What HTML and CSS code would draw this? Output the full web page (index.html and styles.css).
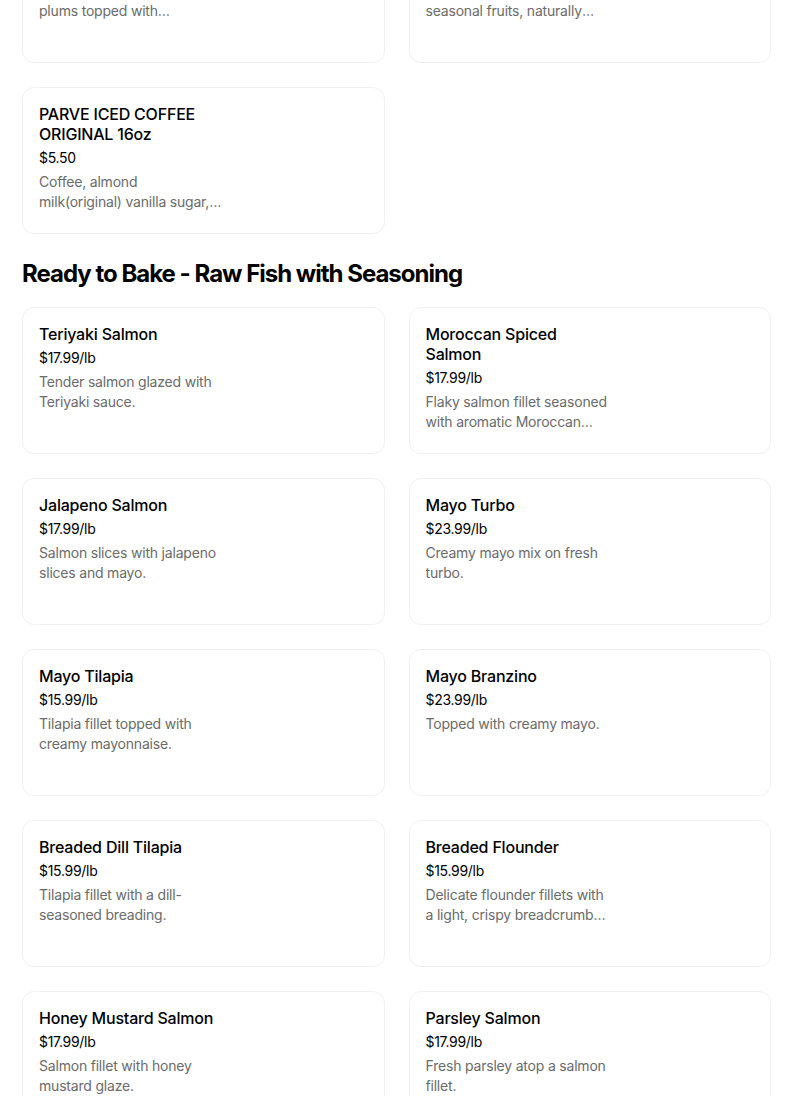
FILE: index.html
```html
<!DOCTYPE html>
<html lang="en">
<head>
<meta charset="utf-8">
<title>Menu</title>
<link rel="stylesheet" href="styles.css">
</head>
<body>
<main class="menu">
  <section class="section section-first">
    <div class="grid">
      <div class="card">
        <div class="info">
          <h3 class="title">Plum Crumble Cake</h3>
          <div class="price">$8.99</div>
          <p class="desc">Soft cake with ripe, juicy plums topped with butterscotch crumble.</p>
        </div>
      </div>
      <div class="card">
        <div class="info">
          <h3 class="title">Fruit Sorbet</h3>
          <div class="price">$6.99</div>
          <p class="desc">Refreshing sorbet with seasonal fruits, naturally sweetened and dairy free.</p>
        </div>
      </div>
      <div class="card">
        <div class="info">
          <h3 class="title">PARVE ICED COFFEE ORIGINAL 16oz</h3>
          <div class="price">$5.50</div>
          <p class="desc">Coffee, almond milk(original) vanilla sugar, crushed ice.</p>
        </div>
      </div>
    </div>
  </section>

  <section class="section">
    <h2 class="section-title">Ready to Bake - Raw Fish with Seasoning</h2>
    <div class="grid">
      <div class="card">
        <div class="info">
          <h3 class="title">Teriyaki Salmon</h3>
          <div class="price">$17.99/lb</div>
          <p class="desc">Tender salmon glazed with Teriyaki sauce.</p>
        </div>
      </div>
      <div class="card">
        <div class="info">
          <h3 class="title">Moroccan Spiced Salmon</h3>
          <div class="price">$17.99/lb</div>
          <p class="desc">Flaky salmon fillet seasoned with aromatic Moroccan spices and herbs.</p>
        </div>
      </div>
      <div class="card">
        <div class="info">
          <h3 class="title">Jalapeno Salmon</h3>
          <div class="price">$17.99/lb</div>
          <p class="desc">Salmon slices with jalapeno slices and mayo.</p>
        </div>
      </div>
      <div class="card">
        <div class="info">
          <h3 class="title">Mayo Turbo</h3>
          <div class="price">$23.99/lb</div>
          <p class="desc">Creamy mayo mix on fresh turbo.</p>
        </div>
      </div>
      <div class="card">
        <div class="info">
          <h3 class="title">Mayo Tilapia</h3>
          <div class="price">$15.99/lb</div>
          <p class="desc">Tilapia fillet topped with creamy mayonnaise.</p>
        </div>
      </div>
      <div class="card">
        <div class="info">
          <h3 class="title">Mayo Branzino</h3>
          <div class="price">$23.99/lb</div>
          <p class="desc">Topped with creamy mayo.</p>
        </div>
      </div>
      <div class="card">
        <div class="info">
          <h3 class="title">Breaded Dill Tilapia</h3>
          <div class="price">$15.99/lb</div>
          <p class="desc">Tilapia fillet with a dill-seasoned breading.</p>
        </div>
      </div>
      <div class="card">
        <div class="info">
          <h3 class="title">Breaded Flounder</h3>
          <div class="price">$15.99/lb</div>
          <p class="desc">Delicate flounder fillets with a light, crispy breadcrumb coating.</p>
        </div>
      </div>
      <div class="card">
        <div class="info">
          <h3 class="title">Honey Mustard Salmon</h3>
          <div class="price">$17.99/lb</div>
          <p class="desc">Salmon fillet with honey mustard glaze.</p>
        </div>
      </div>
      <div class="card">
        <div class="info">
          <h3 class="title">Parsley Salmon</h3>
          <div class="price">$17.99/lb</div>
          <p class="desc">Fresh parsley atop a salmon fillet.</p>
        </div>
      </div>
    </div>
  </section>
</main>
</body>
</html>
```

FILE: styles.css
```css
* { box-sizing: border-box; }

html, body {
  margin: 0;
  padding: 0;
  background: #ffffff;
}

body {
  font-family: Inter, "Noto Sans", "Liberation Sans", sans-serif;
  color: #000000;
  -webkit-font-smoothing: antialiased;
}

.menu {
  width: 749px;
  margin: -84px 0 0 22px;
}

.section-title {
  margin: 24px 0 17px;
  font-size: 24px;
  line-height: 32px;
  font-weight: 700;
  letter-spacing: -1px;
  color: #000000;
}

.grid {
  display: grid;
  grid-template-columns: 1fr 1fr;
  gap: 24px;
}

.card {
  min-height: 147px;
  border: 1px solid #f1f1f1;
  border-radius: 12px;
  padding: 16px 16px 20px;
  display: flex;
}

.info {
  width: 183px;
  display: flex;
  flex-direction: column;
  gap: 4px;
}

.title {
  margin: 0;
  font-size: 16px;
  line-height: 20px;
  font-weight: 500;
  color: #000000;
  letter-spacing: -0.2px;
}

.price {
  font-size: 14px;
  line-height: 20px;
  font-weight: 400;
  color: #000000;
  letter-spacing: -0.3px;
}

.desc {
  margin: 0;
  font-size: 14px;
  line-height: 20px;
  font-weight: 400;
  color: #6b6b6b;
  letter-spacing: -0.2px;
  display: -webkit-box;
  -webkit-line-clamp: 2;
  -webkit-box-orient: vertical;
  overflow: hidden;
}
```
